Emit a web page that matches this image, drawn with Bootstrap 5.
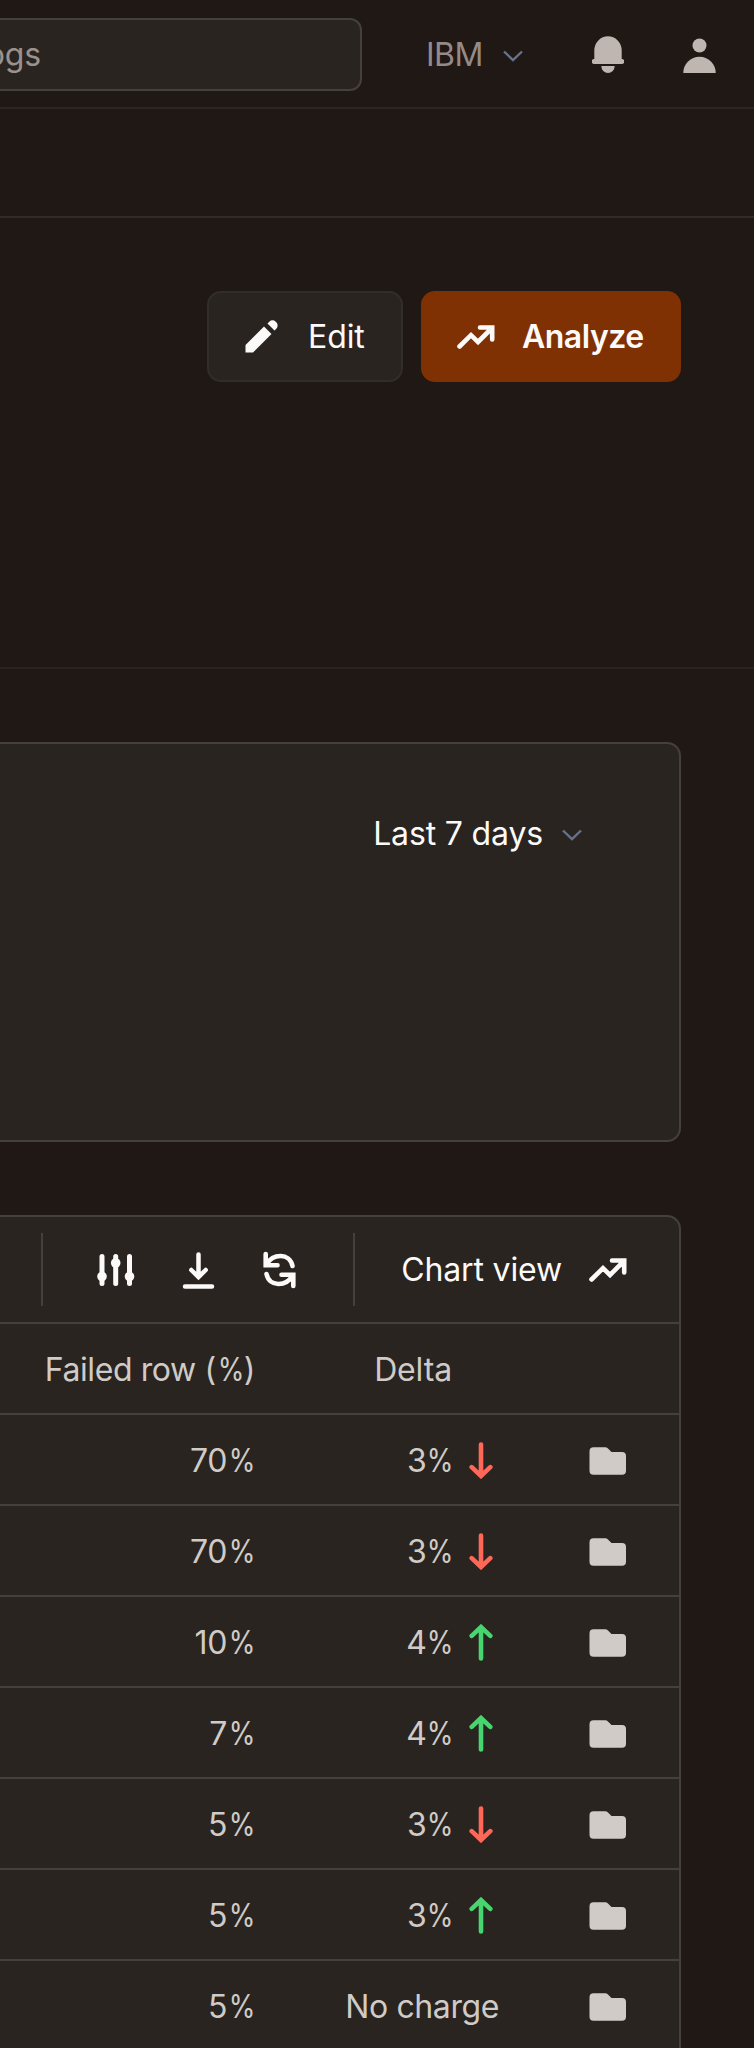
<!DOCTYPE html>
<html lang="en">
<head>
<meta charset="utf-8">
<meta name="viewport" content="width=device-width, initial-scale=1">
<title>Dataset logs</title>
<link href="https://cdn.jsdelivr.net/npm/bootstrap@5.3.0/dist/css/bootstrap.min.css" rel="stylesheet">
<style>
:root{--page:#201815;--panel:#292420;--line:#44403c;--soft:#2c2523;--text:#d0cbc7;--bright:#fcfaf9}
html,body{height:2048px;overflow:hidden}
body{background:var(--page);color:var(--text);font-family:Inter,"Liberation Sans",sans-serif;font-size:32px;line-height:40px;font-weight:400;letter-spacing:-.15px}
svg{display:block;flex:none}
.topbar{height:109px;border-bottom:2px solid var(--soft);padding-top:18px}
.search{width:362px;height:73px;background:var(--panel);border:2px solid var(--line);border-left:0;border-radius:0 12px 12px 0;color:#9b918d}
.query{width:41px;display:flex;justify-content:flex-end}
.org{width:161px;padding-left:64px;color:#958a86;height:73px;letter-spacing:-.5px}
.crumbs{height:109px;border-bottom:2px solid #302c29}
.hero{height:451px;border-bottom:2px solid #2b2321;padding:73px 73px 0 0;gap:18px}
.act{height:91px;border-radius:14px;color:var(--bright);padding:0 0 0 36px;font-size:32px;font-weight:inherit}
.act-edit{width:196px;background:var(--panel);border:2px solid #312d2a;letter-spacing:-.1px}
.act-run{width:260px;background:#803103;font-weight:600;letter-spacing:-.5px}
.panel{width:681px;background:var(--panel);border:2px solid var(--line);border-left:0;color:var(--bright)}
.summary{height:400px;margin-top:73px;border-radius:0 14px 14px 0;padding:70px 97px 0 0}
.grid{height:850px;margin-top:73px;border-bottom:0;border-radius:0 14px 0 0}
.tools{height:107px;border-bottom:2px solid var(--line)}
.rule{width:2px;height:73px;background:var(--line)}
.line{height:91px;border-bottom:2px solid var(--line);color:var(--text);padding-top:2px}
.fail{width:255px;letter-spacing:-.4px}
.delta{width:198px}
.delta-wide{width:244px;letter-spacing:-.4px}
.pct{display:inline-block;transform:scaleX(.85);transform-origin:right;margin-left:-3px}
.delta .pct{margin-left:-5px}
.delta-head{padding-right:1px}
.arrow{margin-left:16px}
.end{margin-right:52px}
</style>
</head>
<body>
<svg width="0" height="0" class="position-absolute">
  <defs>
    <symbol id="trend" viewBox="0 0 38 24"><path d="M2.5 21.5 14 10.2 21 17 34 4M23 2.5H35.2V14.5" fill="none" stroke="currentColor" stroke-width="4.6" stroke-linecap="round" stroke-linejoin="miter"/></symbol>
    <symbol id="chev" viewBox="0 0 20 12"><path d="M1 1.5 10 10 19 1.5" fill="none" stroke="currentColor" stroke-width="2.4"/></symbol>
    <symbol id="folder" viewBox="0 0 38 28"><path d="M4.5.3H16a4 4 0 0 1 3 1.2L22.5 5H33a4 4 0 0 1 4 4V23.700a4 4 0 0 1-4 4H4.500a4 4 0 0 1-4-4V4.300a4 4 0 0 1 4-4Z" fill="currentColor"/></symbol>
    <symbol id="down" viewBox="0 0 24 37"><path d="M12 2.500V33M2.700 25.200 12 34 21.300 25.200" fill="none" stroke="currentColor" stroke-width="4.600" stroke-linecap="round"/></symbol>
  </defs>
</svg>

<header class="topbar d-flex align-items-start">
  <div class="search d-flex align-items-center"><span class="query">ogs</span></div>
  <div class="org d-flex align-items-center"><span>IBM</span>
    <svg class="ms-auto" width="20" height="12" style="color:#64748b;margin-top:2px"><use href="#chev"/></svg></div>
  <svg width="32" height="38" viewBox="0 0 32 38" style="margin:18px 0 0 69px;color:#bfb5b1"><path d="M2.300 23V14.500a13.700 14.300 0 0 1 27.400 0V23a2.500 2.500 0 0 1 0 5H2.300a2.500 2.500 0 0 1 0-5ZM9.300 30H22.700a6.700 7 0 0 1-13.400 0Z" fill="currentColor"/></svg>
  <svg width="33" height="36" viewBox="0 0 33 36" style="margin:19px 0 0 59px;color:#bfb5b1"><circle cx="16.500" cy="8.500" r="7" fill="currentColor"/><path d="M.3 36a16.200 16.200 0 0 1 32.400 0Z" fill="currentColor"/></svg>
</header>
<div class="crumbs"></div>

<section class="hero d-flex justify-content-end align-items-start">
  <button class="act act-edit btn d-flex align-items-center">
    <svg width="33" height="33" viewBox="0 0 33 33"><path d="M.5 32.500V25L19 6.500 26.500 14 8 32.500ZM22.500 3.500l1.800-1.800a4.500 4.500 0 0 1 6.400 0l.6.6a4.500 4.500 0 0 1 0 6.400L29.500 10.500Z" fill="currentColor"/></svg>
    <span style="margin-left:30px">Edit</span>
  </button>
  <button class="act act-run btn border-0 d-flex align-items-center">
    <svg width="38" height="24"><use href="#trend"/></svg>
    <span style="margin-left:27px">Analyze</span>
  </button>
</section>

<section class="panel summary d-flex justify-content-end align-items-start">
  <span>Last 7 days</span>
  <svg width="20" height="12" style="color:#64748b;margin:15px 0 0 19px"><use href="#chev"/></svg>
</section>

<section class="panel grid d-block overflow-hidden">
  <div class="tools d-flex align-items-center">
    <div class="rule" style="margin-left:41px"></div>
    <svg width="38" height="34" viewBox="0 0 38 34" style="margin-left:54px"><g stroke="currentColor" stroke-width="5" stroke-linecap="round"><path d="M5 3.500V30.500M18.700 3.500V30.500M32.500 3.500V30.500"/></g><g fill="currentColor"><circle cx="5" cy="23.500" r="4.800"/><circle cx="18.700" cy="10" r="4.800"/><circle cx="32.500" cy="23.500" r="4.800"/></g></svg>
    <svg width="33" height="38" viewBox="0 0 33 38" style="margin-left:47px"><path d="M16.500 3.500V25M9.300 19 16.500 26 23.700 19M3 35.500H30" fill="none" stroke="currentColor" stroke-width="4.500" stroke-linecap="round"/></svg>
    <svg width="33" height="38" viewBox="0 0 33 38" style="margin-left:48px"><path d="M2.700 3V14.200H14.500M3.500 13.300C10 2.500 26.500 1.500 29.500 15M30.300 35V23.800H18.500M29.500 24.700C23 35.500 6.500 36.500 3.500 23" fill="none" stroke="currentColor" stroke-width="4.600" stroke-linecap="round"/></svg>
    <div class="rule" style="margin-left:57px"></div>
    <span class="ms-auto">Chart view</span>
    <svg class="end" width="38" height="24" style="margin-left:27px"><use href="#trend"/></svg>
  </div>
  <div class="line d-flex align-items-center"><div class="fail text-end">Failed row (<span class="pct">%</span>)</div><div class="delta delta-head text-end">Delta</div></div>
  <div id="rows"></div>
</section>
<script>
const rows=[["70%","3%",-1],["70%","3%",-1],["10%","4%",1],["7%","4%",1],["5%","3%",-1],["5%","3%",1],["5%","No charge",0]];
const pct=t=>t.replace("%",'<span class="pct">%</span>');
document.getElementById("rows").innerHTML=rows.map(([f,d,s])=>`<div class="line d-flex align-items-center"><div class="fail text-end">${pct(f)}</div><div class="${s?"delta":"delta-wide"} text-end">${pct(d)}</div>${s?`<svg class="arrow" width="24" height="37" style="color:${s<0?"#ff6758":"#46d56e"};transform:rotate(${s<0?0:180}deg)"><use href="#down"/></svg>`:""}<svg class="ms-auto end" width="38" height="28"><use href="#folder"/></svg></div>`).join("");
</script>
<script src="https://cdn.jsdelivr.net/npm/bootstrap@5.3.0/dist/js/bootstrap.bundle.min.js"></script>
</body>
</html>
